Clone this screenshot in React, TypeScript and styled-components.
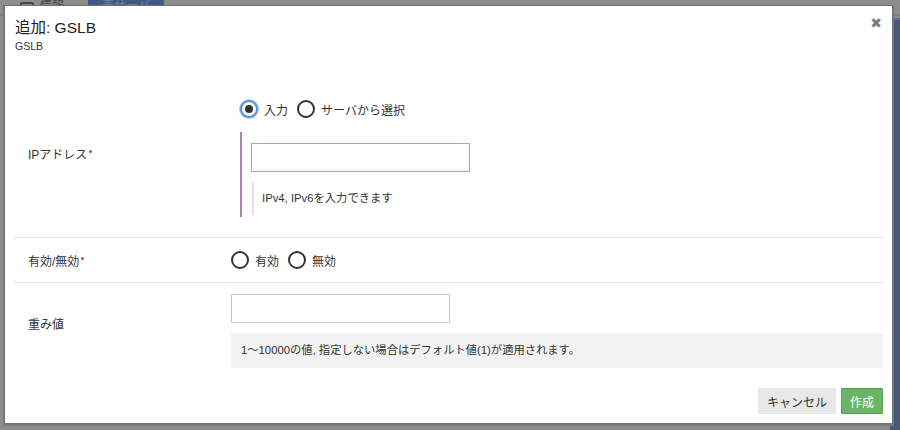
import React from "react";
import styled, { createGlobalStyle, css } from "styled-components";

const GlobalStyle = createGlobalStyle`
  html, body {
    margin: 0;
    padding: 0;
    width: 900px;
    height: 430px;
    overflow: hidden;
    font-family: "Liberation Sans", "Noto Sans CJK JP", sans-serif;
    color: #333;
  }
`;

const Page = styled.div`
  position: relative;
  width: 900px;
  height: 430px;
  background: #8d8d8d;
  display: grid;
  grid-template-rows: 16px 1fr;
`;

const TabStrip = styled.div`
  display: flex;
  align-items: flex-end;
  gap: 10px;
  padding-left: 6px;
  border-bottom: 2px solid #7f7f7f;
  overflow: hidden;
`;

const Tab = styled.div<{ $active?: boolean }>`
  height: 14px;
  padding: 0 14px;
  font-size: 12px;
  line-height: 12px;
  color: ${(p) => (p.$active ? "#6f7f9c" : "#444")};
  background: ${(p) => (p.$active ? "#3d5a85" : "transparent")};
  display: flex;
  align-items: flex-start;
  gap: 6px;
`;

const TabIcon = styled.span`
  width: 10px;
  height: 10px;
  border: 2px solid #4a3a66;
  border-radius: 2px;
  margin-top: 2px;
`;

const PageBody = styled.div`
  display: grid;
  grid-template-columns: 1fr 10px;
`;

const SidePanel = styled.div`
  background: #4a5878;
  border-top: 2px solid #55709a;
  margin-top: 2px;
`;

const Modal = styled.div`
  position: absolute;
  left: 5px;
  top: 6px;
  width: 887px;
  height: 417px;
  box-sizing: border-box;
  background: #fff;
  box-shadow: 0 0 0 1px #727272, 0 1px 0 2px #7a7a7a;
  padding: 11px 9px 0 9px;
  display: flex;
  flex-direction: column;
`;

const Header = styled.div`
  position: relative;
  padding-left: 1px;
`;

const Title = styled.h3`
  margin: 0;
  font-size: 15.5px;
  font-weight: normal;
  line-height: 22px;
  color: #222;
`;

const SubTitle = styled.div`
  font-size: 10.5px;
  line-height: 14px;
  color: #333;
`;

const Close = styled.span`
  position: absolute;
  right: 1px;
  top: -2px;
  font-family: "DejaVu Sans", sans-serif;
  font-size: 14px;
  color: #7a7a7a;
`;

const Form = styled.div`
  margin-top: 37px;
  display: flex;
  flex-direction: column;
`;

const Row = styled.div<{ $divider?: boolean }>`
  display: grid;
  grid-template-columns: 217px 1fr;
  ${(p) =>
    p.$divider &&
    css`
      border-bottom: 1px solid #e2e2e2;
    `}
`;

const Label = styled.div<{ $offset?: number }>`
  padding-left: 14px;
  font-size: 12px;
  color: #333;
  align-self: center;
  margin-top: ${(p) => p.$offset ?? 0}px;
`;

const Required = styled.span`
  display: inline-block;
  width: 3px;
  height: 3px;
  border-radius: 50%;
  background: #d9363e;
  margin-left: 2px;
  vertical-align: 6px;
`;

const Control = styled.div<{ $pad: string }>`
  padding: ${(p) => p.$pad};
  display: flex;
  flex-direction: column;
`;

const RadioGroup = styled.div<{ $indent?: number }>`
  display: flex;
  align-items: center;
  gap: 9px;
  padding-left: ${(p) => p.$indent ?? 0}px;
  font-size: 12px;
  color: #333;
`;

const RadioItem = styled.label`
  display: flex;
  align-items: center;
  gap: 6px;
`;

const RadioCircle = styled.span<{ $checked?: boolean }>`
  width: 14px;
  height: 14px;
  border-radius: 50%;
  border: 2px solid #333;
  box-sizing: content-box;
  position: relative;
  ${(p) =>
    p.$checked &&
    css`
      border-color: #4a90d9;
      box-shadow: 0 0 0 1px #a9c9ee;
      &::after {
        content: "";
        position: absolute;
        left: 3px;
        top: 3px;
        width: 8px;
        height: 8px;
        border-radius: 50%;
        background: #333;
      }
    `}
`;

const Branch = styled.div`
  margin: 14px 0 0 9px;
  border-left: 2px solid #b77fb9;
  padding: 11px 0 0 9px;
  height: 74px;
`;

const InputBox = styled.div<{ $valid?: boolean }>`
  width: 219px;
  height: 29px;
  box-sizing: border-box;
  border: 1px solid ${(p) => (p.$valid ? "#86c47e" : "#c6c6c6")};
  background: #fff;
  display: flex;
`;

const TextInput = styled.input`
  flex: 1;
  min-width: 0;
  border: none;
  outline: none;
  margin: 0;
  padding: 0 6px;
  font-size: 12px;
  background: transparent;
`;

const Hint = styled.div`
  margin: 10px 0 0 1px;
  border-left: 2px solid #e2e2e2;
  padding: 9px 0 9px 8px;
  font-size: 11.3px;
  line-height: 15px;
  color: #333;
`;

const HelpBox = styled.div`
  margin-top: 10px;
  background: #f2f2f2;
  padding: 10px 10px;
  font-size: 11.3px;
  line-height: 15px;
  color: #333;
`;

const Footer = styled.div`
  margin-top: auto;
  padding-bottom: 9px;
  display: flex;
  justify-content: flex-end;
  gap: 5px;
`;

const Button = styled.button<{ $primary?: boolean }>`
  height: 26px;
  padding: 0 8px;
  font-family: "Liberation Sans", "Noto Sans CJK JP", sans-serif;
  font-size: 12px;
  border-radius: 1px;
  cursor: pointer;
  ${(p) =>
    p.$primary
      ? css`
          background: #6ab468;
          border: 1px solid #58a056;
          color: #fff;
        `
      : css`
          background: #e8e8e8;
          border: 1px solid #e8e8e8;
          color: #333;
        `}
`;

const Radio = ({ label, checked }: { label: string; checked?: boolean }) => (
  <RadioItem>
    <RadioCircle $checked={checked} />
    {label}
  </RadioItem>
);

export default function App() {
  return (
    <>
      <GlobalStyle />
      <Page>
        <TabStrip>
          <Tab>
            <TabIcon />
            情報
          </Tab>
          <Tab $active>表サーバ</Tab>
        </TabStrip>
        <PageBody>
          <div />
          <SidePanel />
        </PageBody>

        <Modal>
          <Header>
            <Title>追加: GSLB</Title>
            <SubTitle>GSLB</SubTitle>
            <Close>✖</Close>
          </Header>

          <Form>
            <Row $divider>
              <Label $offset={-20}>
                IPアドレス<Required />
              </Label>
              <Control $pad="10px 0 20px 0">
                <RadioGroup $indent={9}>
                  <Radio label="入力" checked />
                  <Radio label="サーバから選択" />
                </RadioGroup>
                <Branch>
                  <InputBox $valid>
                    <TextInput />
                  </InputBox>
                  <Hint>IPv4, IPv6を入力できます</Hint>
                </Branch>
              </Control>
            </Row>

            <Row $divider>
              <Label>
                有効/無効<Required />
              </Label>
              <Control $pad="13px 0 13px 0">
                <RadioGroup>
                  <Radio label="有効" />
                  <Radio label="無効" />
                </RadioGroup>
              </Control>
            </Row>

            <Row>
              <Label $offset={-4}>重み値</Label>
              <Control $pad="11px 0 0 0">
                <InputBox>
                  <TextInput />
                </InputBox>
                <HelpBox>1〜10000の値, 指定しない場合はデフォルト値(1)が適用されます。</HelpBox>
              </Control>
            </Row>
          </Form>

          <Footer>
            <Button>キャンセル</Button>
            <Button $primary>作成</Button>
          </Footer>
        </Modal>
      </Page>
    </>
  );
}
